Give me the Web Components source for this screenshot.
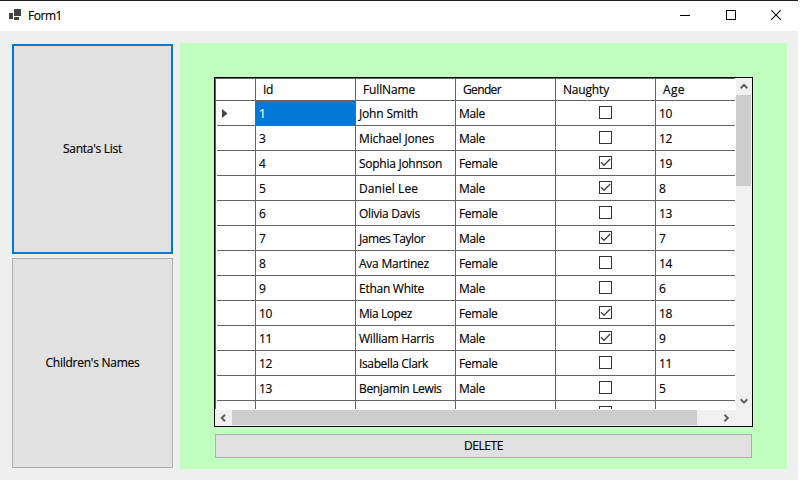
<!DOCTYPE html>
<html lang="en">
<head>
<meta charset="utf-8">
<title>Form1</title>
<style>
html,body{margin:0;background:#fff}
body{font:12px/16px "Open Sans","Noto Sans",sans-serif;color:#000;overflow:hidden;-webkit-text-stroke:.15px currentColor}
</style>
</head>
<body>
<form-window></form-window>
<script>
const define = (name, html, setup) => customElements.define(name, class extends HTMLElement {
  connectedCallback() {
    if (this.shadowRoot) return;
    const t = document.createElement('template');
    t.innerHTML = typeof html === 'function' ? html(this) : html;
    this.attachShadow({mode: 'open'}).append(t.content.cloneNode(true));
    if (setup) setup(this);
  }
});

// Single-line label whose tracking is adjusted to a given advance width.
define('ui-label', `<style>:host{display:inline-block;white-space:pre}span{display:inline-block}</style><span><slot></slot></span>`, el => {
  const w = +el.getAttribute('w'), s = el.shadowRoot.querySelector('span');
  if (!w) return;
  const n = el.textContent.length;
  s.style.letterSpacing = ((w - s.getBoundingClientRect().width) / n).toFixed(3) + 'px';
});

define('title-bar', `<style>
:host{display:flex;height:30px;background:#fff;border-top:1px solid #231f20;align-items:center}
.icon{margin:-2px 0 0 8px;width:14px;height:12px}
ui-label{margin-left:6px;margin-top:-1px;flex:1}
svg{display:block}
.c{width:46px;display:flex;justify-content:center;margin-top:-2px}
.x{width:44px}
</style>
<svg class="icon" viewBox="0 1 14 12" shape-rendering="crispEdges" fill="#424242"><path d="M6 1h7v7H6zM1 5h4v6H1zM6 9h5v3H6z"/></svg>
<ui-label w="34">Form1</ui-label>
<div class="c"><svg width="10" height="10" shape-rendering="crispEdges"><path d="M0 5h10v1H0z"/></svg></div>
<div class="c"><svg width="10" height="10" shape-rendering="crispEdges"><path d="M.5 .5h9v9h-9z" fill="none" stroke="#000"/></svg></div>
<div class="c x"><svg width="10" height="10"><path d="M.2 .2l9.6 9.6M9.8 .2L.2 9.8" fill="none" stroke="#000" stroke-width="1.1"/></svg></div>`);

define('push-button', `<style>
:host{display:flex;box-sizing:border-box;align-items:center;justify-content:center;background:#e1e1e1;border:1px solid #adadad}
:host([focused]){border:2px solid #0078d7}
</style><slot></slot>`);

define('check-box', el => `<style>:host{display:block;width:13px;height:13px}svg{display:block}</style>
<svg width="13" height="13"><path d="M.5 .5h12v12H.5z" fill="#fff" stroke="#333" shape-rendering="crispEdges"/>${el.hasAttribute('checked') ? '<path d="M2 6.2L5 9.2L11.2 3" fill="none" stroke="#444" stroke-width="1.35"/>' : ''}</svg>`);

define('scroll-bar', el => {
  const v = el.hasAttribute('vertical');
  return `<style>
:host{display:flex;flex-direction:${v ? 'column' : 'row'};background:#f0f0f0}
.b{display:flex;box-sizing:border-box;align-items:center;justify-content:center;${v ? 'height:17px;width:15px;padding-bottom:1px' : 'width:17px;height:15px;padding-right:1px'}}
.t{background:#cdcdcd;${v ? 'width:15px;height:91px' : 'height:15px;width:465px'}}
.g{flex:1}svg{display:block}
</style>
<div class="b"><svg width="8" height="8" viewBox="0 0 8 8" fill="none" stroke="#606060" stroke-width="2"><path d="${v ? 'M.7 6.3L4 3L7.3 6.3' : 'M6 .7L2.7 4L6 7.3'}"/></svg></div><div class="t"></div><div class="g"></div>
<div class="b"><svg width="8" height="8" viewBox="0 0 8 8" fill="none" stroke="#606060" stroke-width="2"><path d="${v ? 'M.7 2.3L4 5.6L7.3 2.3' : 'M2.5 .7L5.8 4L2.5 7.3'}"/></svg></div>${v ? '' : '<div style="width:17px"></div>'}`;
});

const rows = [
 [1,'John Smith',59,'Male',0,10],[3,'Michael Jones',75,'Male',0,12],[4,'Sophia Johnson',83,'Female',1,19],
 [5,'Daniel Lee',59,'Male',1,8],[6,'Olivia Davis',61,'Female',0,13],[7,'James Taylor',66,'Male',1,7],
 [8,'Ava Martinez',70,'Female',0,14],[9,'Ethan White',65,'Male',0,6],[10,'Mia Lopez',53,'Female',1,18],
 [11,'William Harris',75,'Male',1,9],[12,'Isabella Clark',69,'Female',0,11],[13,'Benjamin Lewis',82.5,'Male',0,5]];
const num = n => `<ui-label w="${String(n).length * 6.5}">${n}</ui-label>`;

define('data-grid', `<style>
:host{display:grid;box-sizing:border-box;width:539px;height:350px;border:1px solid #000;background:#f0f0f0;grid-template:332px 16px / 521px 16px}
.view{overflow:hidden;background:#fff;height:331px;width:520px;box-sizing:border-box;border:solid #646464;border-width:1px 0 0 1px;box-shadow:1px 1px #fff}
.row{display:grid;grid-template-columns:40px repeat(4,100px) 79px;height:25px}
.row>div{box-sizing:border-box;border:solid #646464;border-width:0 1px 1px 0;display:flex;align-items:center;padding:1px 0 0 3px}
.row>div:last-child{border-right:0}
.head{height:22px}
.head>div{padding-left:7px;padding-top:0}
.row>.sel{background:#0078d7;color:#fff}
.row>.mark{padding:1px 0 0 5px;margin-left:1px}
.row>.chk{justify-content:center;padding:0 0 1px}
</style>
<div class="view">
<div class="row head"><div></div><div><ui-label w="10">Id</ui-label></div><div><ui-label w="52">FullName</ui-label></div><div><ui-label w="38">Gender</ui-label></div><div><ui-label w="46">Naughty</ui-label></div><div><ui-label w="22">Age</ui-label></div></div>
${rows.map((r, i) => `<div class="row"><div class="mark">${i ? '' : '<svg width="6" height="9"><path d="M0 0L5.5 4.5L0 9z" fill="#444"/></svg>'}</div><div class="${i ? '' : 'sel'}">${num(r[0])}</div><div><ui-label w="${r[2]}">${r[1]}</ui-label></div><div><ui-label w="${r[3] === 'Male' ? 26 : 38.5}">${r[3]}</ui-label></div><div class="chk"><check-box ${r[4] ? 'checked' : ''}></check-box></div><div>${num(r[5])}</div></div>`).join('')}
<div class="row"><div class="mark"></div><div></div><div></div><div></div><div class="chk"><check-box></check-box></div><div></div></div>
</div>
<scroll-bar vertical></scroll-bar>
<scroll-bar style="grid-column:1/3"></scroll-bar>`);

define('form-window', `<style>
:host{display:flex;flex-direction:column;width:798px;height:480px;background:#efefef}
main{display:flex;gap:7px;padding:12px 11px 11px 12px;flex:1}
nav{display:flex;flex-direction:column;gap:4px;padding-top:1px;width:161px}
nav push-button{height:210px}
section{box-sizing:border-box;width:607px;height:426px;background:#c0ffc0;padding:34px 34px 0;display:flex;flex-direction:column;gap:7px}
section push-button{height:24px;margin:0 1px;width:537px}
</style>
<title-bar></title-bar>
<main>
<nav><push-button focused><ui-label w="59">Santa's List</ui-label></push-button><push-button><ui-label w="94">Children's Names</ui-label></push-button></nav>
<section><data-grid></data-grid><push-button><ui-label w="39">DELETE</ui-label></push-button></section>
</main>`);
</script>
</body>
</html>
